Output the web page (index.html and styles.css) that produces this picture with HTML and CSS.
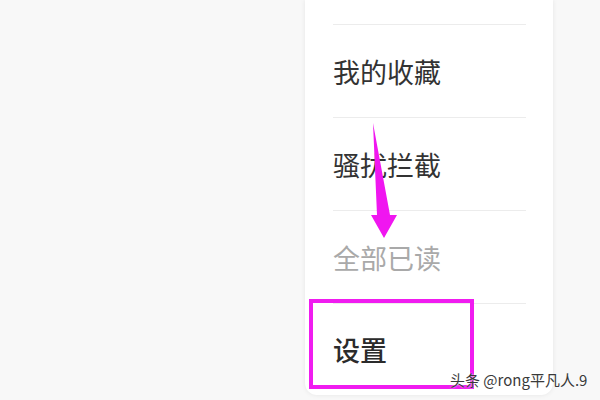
FILE: index.html
```html
<!DOCTYPE html>
<html>
<head>
    <title>Menu</title>
    <link rel="stylesheet" href="styles.css">
</head>
<body>
    <div class="screen">
        <div class="menu">
            <div class="menu-top"></div>
            <div class="item">我的收藏</div>
            <div class="item">骚扰拦截</div>
            <div class="item muted">全部已读</div>
            <div class="item last">设置</div>
        </div>

        <div class="highlight"></div>

        <svg class="arrow" width="40" height="130" viewBox="0 0 40 130">
            <polygon points="3,3 7,95 1,95 14,118 27,95 20,95" fill="#f016f0"/>
        </svg>

        <div class="watermark">头条 @rong平凡人.9</div>
    </div>
</body>
</html>
```

FILE: styles.css
```css
body {
    margin: 0;
    background: #f8f8f8;
    font-family: "Noto Sans CJK SC", "Noto Sans", sans-serif;
}

.screen {
    position: relative;
    width: 600px;
    height: 400px;
    overflow: hidden;
    display: flex;
    justify-content: flex-start;
}

.menu {
    margin-left: 305px;
    width: 248px;
    height: 395px;
    background: #fff;
    border-radius: 0 0 12px 12px;
    box-shadow: 0 0 5px rgba(0, 0, 0, 0.08);
    display: flex;
    flex-direction: column;
}

.menu-top {
    height: 24px;
}

.item {
    height: 92px;
    margin: 0 27px 0 28px;
    border-top: 1px solid #ececec;
    display: flex;
    align-items: center;
    font-size: 27px;
    color: #333;
}

.item.muted {
    color: #a9a9a9;
}

.item.last {
    height: 91px;
    font-weight: 500;
    color: #2b2b2b;
}

.highlight {
    position: absolute;
    left: 309px;
    top: 299px;
    width: 157px;
    height: 82px;
    border: 4px solid #f01cf0;
}

.arrow {
    position: absolute;
    left: 370px;
    top: 120px;
}

.watermark {
    position: absolute;
    left: 450px;
    top: 369px;
    font-size: 15px;
    color: #3a3a3a;
    text-shadow: 0 0 2px #fff;
}
```
